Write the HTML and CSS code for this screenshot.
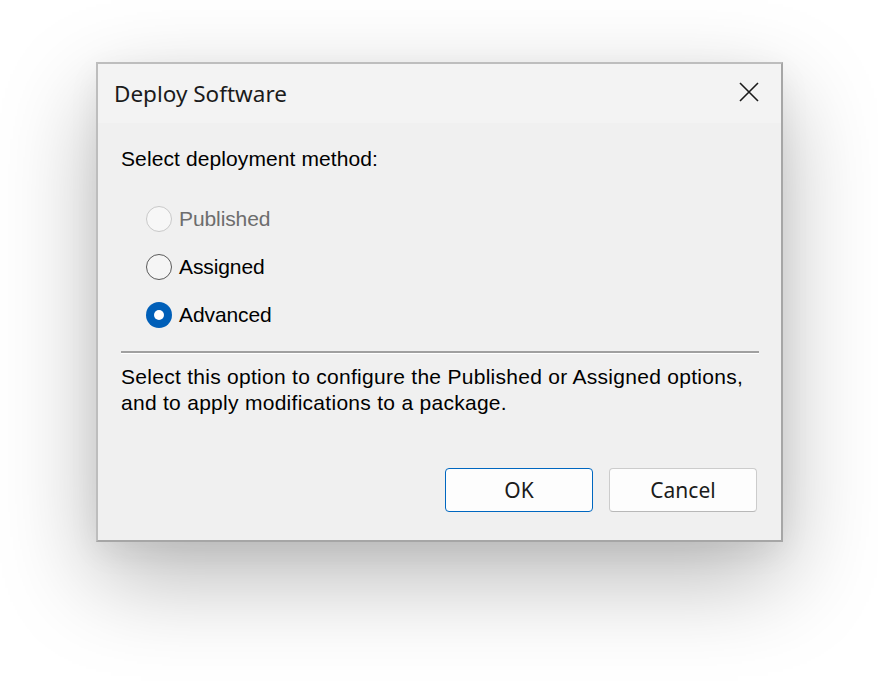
FILE: index.html
```html
<!DOCTYPE html>
<html>
<head>
<meta charset="utf-8">
<link rel="stylesheet" href="styles.css">
</head>
<body>
<div class="dialog">
  <div class="titlebar">
    <span class="title">Deploy Software</span>
    <span class="close">
      <svg width="20" height="20" viewBox="0 0 20 20"><path d="M1 1 L19 19 M19 1 L1 19" stroke="#1a1a1a" stroke-width="1.6" fill="none"/></svg>
    </span>
  </div>
  <div class="content">
    <div class="prompt">Select deployment method:</div>
    <div class="options">
      <div class="option disabled"><span class="radio"></span><span class="label">Published</span></div>
      <div class="option"><span class="radio"></span><span class="label">Assigned</span></div>
      <div class="option checked"><span class="radio"></span><span class="label">Advanced</span></div>
    </div>
    <div class="separator"></div>
    <p class="desc">Select this option to configure the Published or Assigned options,<br>and to apply modifications to a package.</p>
    <div class="buttons">
      <button class="btn primary">OK</button>
      <button class="btn">Cancel</button>
    </div>
  </div>
</div>
</body>
</html>
```

FILE: styles.css
```css
html, body {
  margin: 0;
  padding: 0;
  background: #ffffff;
}
body {
  padding: 62px 0 0 96px;
  height: 700px;
  box-sizing: border-box;
  overflow: hidden;
}
.dialog {
  width: 687px;
  box-sizing: border-box;
  border: 2px solid #bdbdbd;
  border-right-color: #a6a6a6;
  border-bottom-color: #a6a6a6;
  background: #f0f0f0;
  box-shadow: 0 36px 90px rgba(0,0,0,0.28), 0 10px 30px rgba(0,0,0,0.06);
}
.titlebar {
  height: 59px;
  background: #f3f3f3;
  display: flex;
  align-items: center;
  justify-content: space-between;
  padding: 0 22px 0 16px;
}
.title {
  font-family: "Noto Sans", sans-serif;
  font-size: 22.5px;
  color: #1b1b1b;
}
.close {
  display: flex;
  width: 20px;
  height: 20px;
  position: relative;
  top: -2px;
}
.content {
  padding: 24px 22px 28px 23px;
  font-family: "Liberation Sans", Arial, sans-serif;
  font-size: 21px;
  letter-spacing: 0.1px;
  color: #000;
}
.prompt {
  line-height: 24px;
}
.options {
  display: flex;
  flex-direction: column;
  gap: 22px;
  padding: 35px 0 0 25px;
}
.option {
  display: flex;
  align-items: center;
  gap: 7px;
  height: 26px;
}
.label {
  letter-spacing: -0.1px;
}
.radio {
  width: 26px;
  height: 26px;
  box-sizing: border-box;
  border-radius: 50%;
  border: 1.5px solid #5a5a5a;
  background: #f5f5f5;
  display: flex;
  align-items: center;
  justify-content: center;
}
.option.disabled .radio {
  border-color: #c9c9c9;
  background: #f7f7f7;
}
.option.disabled .label {
  color: #6d6d6d;
}
.option.checked .radio {
  border: none;
  background: #005fb8;
}
.option.checked .radio::after {
  content: "";
  width: 10px;
  height: 10px;
  border-radius: 50%;
  background: #ffffff;
}
.separator {
  margin-top: 23px;
  height: 2px;
  background: #a0a0a0;
  border-bottom: 1px solid #ffffff;
}
.desc {
  margin: 10px 0 0 0;
  line-height: 26px;
  letter-spacing: 0.28px;
}
.buttons {
  display: flex;
  justify-content: flex-end;
  gap: 16px;
  margin-top: 52px;
  padding-right: 2px;
}
.btn {
  width: 148px;
  height: 44px;
  box-sizing: border-box;
  background: #fdfdfd;
  border: 1px solid #cccccc;
  border-bottom-color: #b8b8b8;
  border-radius: 4px;
  font-family: "Noto Sans", sans-serif;
  font-size: 21px;
  color: #1b1b1b;
  padding: 0;
}
.btn.primary {
  border: 1px solid #0067c0;
}
```
